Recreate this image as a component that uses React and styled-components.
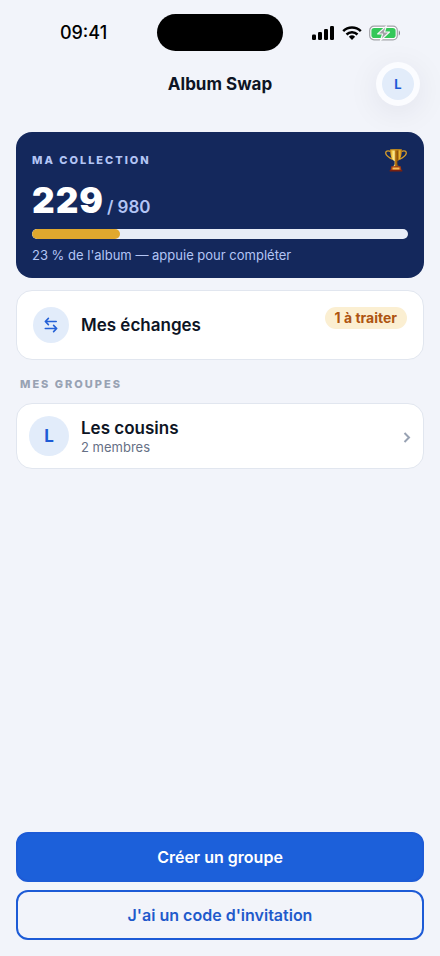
import React from "react";
import styled, { createGlobalStyle } from "styled-components";

const GlobalStyle = createGlobalStyle`
  * { box-sizing: border-box; }
  body {
    margin: 0;
    background: #f2f4fa;
    color: #0d1424;
    font-family: Inter, "Liberation Sans", sans-serif;
  }
  button { font-family: inherit; cursor: pointer; }
  h1, h2, p { margin: 0; }
`;

const Screen = styled.div`
  min-height: 100vh;
  display: flex;
  flex-direction: column;
`;

const StatusBar = styled.div`
  display: grid;
  grid-template-columns: 1fr 126px 1fr;
  align-items: center;
  padding-top: 14px;
`;

const Time = styled.time`
  justify-self: center;
  padding-left: 10px;
  color: #000;
  font-size: 18px;
  font-weight: 500;
  line-height: 37px;
`;

const Island = styled.div`
  height: 37px;
  border-radius: 19px;
  background: #000;
`;

const StatusIcons = styled.div`
  justify-self: center;
  display: flex;
  align-items: center;
  gap: 7px;
  padding-right: 10px;
`;

const Header = styled.header`
  display: grid;
  grid-template-columns: 1fr auto 1fr;
  align-items: center;
  padding: 11px 20px 0;
`;

const Title = styled.h1`
  grid-column: 2;
  font-size: 17px;
  font-weight: 700;
  line-height: 22px;
`;

const ProfileButton = styled.button`
  justify-self: end;
  width: 44px;
  height: 44px;
  padding: 6px;
  border: 0;
  border-radius: 50%;
  background: #fbfcff;
  box-shadow: 0 6px 32px rgba(20, 30, 60, 0.08);
`;

const Avatar = styled.span`
  flex: none;
  display: flex;
  align-items: center;
  justify-content: center;
  width: ${(p) => p.$size}px;
  height: ${(p) => p.$size}px;
  border-radius: 50%;
  background: #e2ecfa;
  color: #1d5bd6;
  font-size: ${(p) => p.$font || 17}px;
  font-weight: 700;
`;

const Main = styled.main`
  flex: 1;
  display: flex;
  flex-direction: column;
  padding: 26px 16px 16px;
`;

const CollectionCard = styled.button`
  display: flex;
  flex-direction: column;
  width: 100%;
  padding: 16px 16px 15px;
  border: 0;
  border-radius: 16px;
  background: #14285c;
  color: #b3c5f5;
  text-align: left;
`;

const CardTop = styled.span`
  display: flex;
  align-items: center;
  justify-content: space-between;
  height: 24px;
`;

const Overline = styled.span`
  font-size: 11px;
  font-weight: 800;
  line-height: 16px;
  letter-spacing: 2px;
`;

const Count = styled.span`
  display: flex;
  align-items: baseline;
  gap: 3px;
  margin-top: 8px;
  font-size: 17px;
  font-weight: 600;
  line-height: 41px;
`;

const CountValue = styled.strong`
  color: #fff;
  font-size: 35px;
  font-weight: 900;
  letter-spacing: 1px;
`;

const Track = styled.span`
  display: block;
  width: 100%;
  height: 10px;
  margin-top: 1px;
  border-radius: 5px;
  background: #e8edf7;
  overflow: hidden;
`;

const Fill = styled.span`
  display: block;
  height: 100%;
  border-radius: 5px;
  background: #e0a82e;
`;

const Hint = styled.span`
  margin-top: 8px;
  font-size: 13px;
  font-weight: 400;
  line-height: 16px;
`;

const RowCard = styled.button`
  display: flex;
  align-items: center;
  gap: 12px;
  width: 100%;
  padding: ${(p) => (p.$roomy ? "16px" : "12px")};
  border: 1px solid #e1e6ef;
  border-radius: 16px;
  background: #fff;
  color: #0d1424;
  text-align: left;
`;

const ExchangeCard = styled(RowCard)`
  margin-top: 12px;
`;

const RowText = styled.span`
  flex: 1;
  display: flex;
  flex-direction: column;
`;

const RowTitle = styled.span`
  font-size: 17px;
  font-weight: 600;
  line-height: 22px;
`;

const RowDetail = styled.span`
  color: #667085;
  font-size: 13px;
  line-height: 16px;
`;

const Pill = styled.span`
  align-self: flex-start;
  padding: 3px 10px;
  border-radius: 11px;
  background: #fbefd2;
  color: #ae5410;
  font-size: 14px;
  font-weight: 700;
  line-height: 16px;
`;

const SectionTitle = styled.h2`
  padding: 0 4px;
  margin: 16px 0 11px;
  color: #98a2b3;
  font-size: 11px;
  font-weight: 800;
  line-height: 16px;
  letter-spacing: 2px;
`;

const Actions = styled.div`
  display: flex;
  flex-direction: column;
  gap: 8px;
  margin-top: auto;
`;

const ActionButton = styled.button`
  height: 50px;
  border: 2px solid #1d5bd6;
  border-radius: 12px;
  background: ${(p) => (p.$primary ? "#1c60da" : "transparent")};
  color: ${(p) => (p.$primary ? "#fff" : "#1f5acb")};
  font-size: 16px;
  font-weight: 600;
`;

const Signal = () => (
  <svg width="23" height="14" viewBox="0 0 23 14" aria-hidden="true">
    <rect x="0" y="8.5" width="4" height="5.5" rx="1.2" />
    <rect x="6" y="6" width="4" height="8" rx="1.2" />
    <rect x="12" y="3" width="4" height="11" rx="1.2" />
    <rect x="18" y="0" width="4" height="14" rx="1.2" />
  </svg>
);

const Wifi = () => (
  <svg width="20" height="14" viewBox="0 0 20 14" aria-hidden="true">
    <g fill="none" stroke="#000" strokeWidth="2.5">
      <path d="M1.2 5.1a12.6 12.6 0 0 1 17.6 0" />
      <path d="M4.5 8.5a7.9 7.9 0 0 1 11 0" />
    </g>
    <path d="M6.9 10.8a4.5 4.5 0 0 1 6.2 0L10 14Z" />
  </svg>
);

const Battery = () => (
  <svg width="32" height="16" viewBox="0 0 32 16" aria-hidden="true">
    <rect x="0.7" y="1.2" width="27.6" height="13.6" rx="4.3" fill="#fff" stroke="#a2a3a8" strokeWidth="1.2" />
    <rect x="2.4" y="2.9" width="24.2" height="10.2" rx="2.8" fill="#34c759" />
    <path d="M29.8 5.5c1.6.6 1.6 4.4 0 5Z" fill="#85868b" />
    <path d="M17.6.7 8.6 9h5l-2.200 6.500L20.500 7h-5Z" fill="#a2a3a8" stroke="#f5f8f7" strokeWidth="1.1" strokeLinejoin="round" />
  </svg>
);

const Trophy = () => (
  <svg width="24" height="24" viewBox="0 0 24 24" aria-hidden="true">
    <defs>
      <linearGradient id="gold" x1="0" x2="1">
        <stop offset="0" stopColor="#b77710" />
        <stop offset="0.18" stopColor="#f5d04b" />
        <stop offset="0.34" stopColor="#fff0a0" />
        <stop offset="0.46" stopColor="#bb7a12" />
        <stop offset="0.62" stopColor="#8d520c" />
        <stop offset="0.8" stopColor="#edb82f" />
        <stop offset="1" stopColor="#a96810" />
      </linearGradient>
    </defs>
    <path d="M6.7 3.5C3.5 2.2 1.2 3.2 1.8 5.6c.6 2.7 3.7 4.2 7 5.8M17.3 3.5c3.2-1.3 5.5-.3 4.9 2.1-.6 2.7-3.7 4.2-7 5.8" fill="none" stroke="#d49b2a" strokeWidth="1.4" />
    <path d="M6 1.5h12c0 5.8-1.5 10.2-4.6 11.8v2.4c0 1.5 1.1 2.2 2.2 3H8.4c1.1-.8 2.2-1.5 2.2-3v-2.4C7.5 11.7 6 7.3 6 1.5Z" fill="url(#gold)" />
    <ellipse cx="12" cy="1.7" rx="6" ry="0.7" fill="#bd861d" />
    <path d="M7.3 18.3h9.4l.8 4.5h-11Z" fill="#a63e13" />
    <path d="M8.5 19.5h7v2h-7Z" fill="#f6bd55" />
    <path d="M5.7 22h12.6v1.5H5.7Z" fill="#79200f" />
  </svg>
);

const Exchange = () => (
  <svg width="14" height="16" viewBox="0 0 14 16" fill="none" stroke="#2460d6" strokeWidth="1.6" strokeLinecap="round" strokeLinejoin="round" aria-hidden="true">
    <path d="M12.2 4.5H1.3M4.4 1.4L1.3 4.5l3.100 3.100M1.300 11.500h11.400M9.600 8.400l3.100 3.100-3.100 3.100" />
  </svg>
);

const Chevron = () => (
  <svg width="8" height="11" viewBox="0 0 8 11" fill="none" stroke="#98a2b3" strokeWidth="2" aria-hidden="true">
    <path d="M1.5 1l4.500 4.500L1.500 10" />
  </svg>
);

const ChevronSlot = styled.span`
  display: flex;
  padding: 2px 0 0;
`;

const ExchangeRow = styled.span`
  display: flex;
  flex: 1;
  align-items: center;
  gap: 12px;
`;

export default function App() {
  const owned = 229;
  const total = 980;
  return (
    <Screen>
      <GlobalStyle />
      <StatusBar>
        <Time>09:41</Time>
        <Island />
        <StatusIcons>
          <Signal />
          <Wifi />
          <Battery />
        </StatusIcons>
      </StatusBar>
      <Header>
        <Title>Album Swap</Title>
        <ProfileButton aria-label="Profil">
          <Avatar $size={32} $font={13}>L</Avatar>
        </ProfileButton>
      </Header>
      <Main>
        <CollectionCard>
          <CardTop>
            <Overline>MA COLLECTION</Overline>
            <Trophy />
          </CardTop>
          <Count>
            <CountValue>{owned}</CountValue>
            <span>/ {total}</span>
          </Count>
          <Track>
            <Fill style={{ width: `${(owned / total) * 100}%` }} />
          </Track>
          <Hint>23 % de l'album — appuie pour compléter</Hint>
        </CollectionCard>
        <ExchangeCard $roomy>
          <ExchangeRow>
            <Avatar $size={36}><Exchange /></Avatar>
            <RowTitle>Mes échanges</RowTitle>
          </ExchangeRow>
          <Pill>1 à traiter</Pill>
        </ExchangeCard>
        <SectionTitle>MES GROUPES</SectionTitle>
        <RowCard>
          <Avatar $size={40}>L</Avatar>
          <RowText>
            <RowTitle>Les cousins</RowTitle>
            <RowDetail>2 membres</RowDetail>
          </RowText>
          <ChevronSlot><Chevron /></ChevronSlot>
        </RowCard>
        <Actions>
          <ActionButton $primary>Créer un groupe</ActionButton>
          <ActionButton>J'ai un code d'invitation</ActionButton>
        </Actions>
      </Main>
    </Screen>
  );
}
